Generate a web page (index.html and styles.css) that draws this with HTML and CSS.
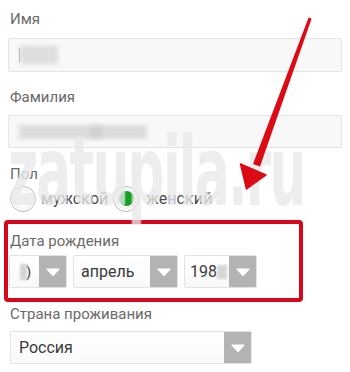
FILE: index.html
```html
<!DOCTYPE html>
<html lang="ru">
<head>
<meta charset="utf-8">
<link rel="stylesheet" href="styles.css">
</head>
<body>
<div class="form">
  <div class="lbl">Имя</div>
  <div class="input"><span class="caret"></span><span class="blur blur-name"></span></div>

  <div class="lbl lbl-2">Фамилия</div>
  <div class="input input-2"><span class="blur blur-surname"></span><span class="blur blur-dot"></span></div>

  <div class="lbl lbl-sex">Пол</div>
  <div class="radios">
    <span class="radio"></span><span class="rtext">мужской</span>
    <span class="radio radio-on"><span class="dot"></span></span><span class="rtext">женский</span>
  </div>

  <div class="redbox">
    <div class="lbl lbl-dob">Дата рождения</div>
    <div class="dob">
      <div class="sel sel-day"><span class="val"><span class="blur blur-day"></span><span class="paren">)</span></span><span class="arr"><svg width="14" height="8" viewBox="0 0 14 8"><path d="M1 1 H13 L7 7.5 Z" fill="#fff" stroke="#fff" stroke-width="1.2" stroke-linejoin="round"/></svg></span></div>
      <div class="sel sel-month"><span class="val">апрель</span><span class="arr"><svg width="14" height="8" viewBox="0 0 14 8"><path d="M1 1 H13 L7 7.5 Z" fill="#fff" stroke="#fff" stroke-width="1.2" stroke-linejoin="round"/></svg></span></div>
      <div class="sel sel-year"><span class="val">198<span class="blur blur-year"></span></span><span class="arr"><svg width="14" height="8" viewBox="0 0 14 8"><path d="M1 1 H13 L7 7.5 Z" fill="#fff" stroke="#fff" stroke-width="1.2" stroke-linejoin="round"/></svg></span></div>
    </div>
  </div>

  <div class="lbl lbl-country">Страна проживания</div>
  <div class="sel sel-country"><span class="val">Россия</span><span class="arr"><svg width="14" height="8" viewBox="0 0 14 8"><path d="M1 1 H13 L7 7.5 Z" fill="#fff" stroke="#fff" stroke-width="1.2" stroke-linejoin="round"/></svg></span></div>
</div>

<div class="watermark">zatupila.ru</div>

<svg class="pointer" width="350" height="372" viewBox="0 0 350 372">
  <polygon points="308.6,17.6 311.6,18.8 260,166.5 253,164" fill="#dc0a14"/>
  <polygon points="240.5,164 266,175 246.5,189" fill="#dc0a14" stroke="#dc0a14" stroke-width="1.5" stroke-linejoin="round"/>
</svg>
</body>
</html>
```
FILE: styles.css
```css
* { box-sizing: border-box; }
html, body { margin: 0; padding: 0; background: #fff; }
body {
  width: 350px;
  height: 372px;
  overflow: hidden;
  position: relative;
  font-family: Roboto, "Liberation Sans", sans-serif;
}
.form {
  padding: 10px 8px 0 8px;
}
.lbl {
  font-size: 15px;
  line-height: 18px;
  color: #6a6a6a;
  padding-left: 2px;
}
.lbl-2 { margin-top: 16px; }
.lbl-sex { margin-top: 17px; }
.lbl-country { margin-top: 3px; }
.lbl-dob { margin-top: 0; padding-left: 2px; }

.input {
  position: relative;
  margin-top: 10px;
  width: 334px;
  height: 34px;
  background: #f8f8f8;
  border: 1px solid #e4e4e4;
  border-radius: 2px;
  display: flex;
  align-items: center;
  padding-left: 10px;
}
.input-2 { margin-top: 9px; height: 33px; }

.caret {
  width: 1px;
  height: 14px;
  background: #a0a0a0;
}
.blur {
  display: inline-block;
  background: #d9d9d9;
  filter: blur(2px);
}
.blur-name { width: 38px; height: 18px; background: #dedede; }
.blur-surname { width: 128px; height: 14px; background: #dcdcdc; }
.blur-dot {
  position: absolute;
  left: 80px;
  top: 9px;
  width: 14px;
  height: 14px;
  border-radius: 50%;
  background: #d2d2d2;
}

.radios {
  display: flex;
  align-items: center;
  margin-top: 2px;
  height: 27px;
  padding-left: 2px;
}
.radio {
  width: 26px;
  height: 26px;
  border-radius: 50%;
  border: 1.5px solid #b9b9b9;
  background: #fff;
  box-shadow: inset 0 0 0 2px #fff, inset 0 0 0 3px #ececec;
  display: flex;
  align-items: center;
  justify-content: center;
  flex: none;
}
.dot {
  width: 15px;
  height: 15px;
  border-radius: 50%;
  background: #12a024;
}
.rtext {
  font-size: 16px;
  color: #4a4a4a;
  margin-left: 5px;
  margin-right: 5px;
  letter-spacing: 0.1px;
}
.radio-on + .rtext { margin-left: 7px; }

.redbox {
  margin-top: 8px;
  margin-left: -4px;
  width: 299px;
  border: 4px solid #d8061b;
  border-radius: 4px;
  padding: 8px 0 10px 0;
}
.dob {
  display: flex;
  gap: 6px;
  margin-top: 5px;
  padding-left: 1px;
}
.sel {
  display: flex;
  height: 33px;
  background: linear-gradient(#fff, #f9f9f9);
  border: 1px solid #e3e3e3;
  border-radius: 2px;
}
.val {
  flex: 1;
  display: flex;
  align-items: center;
  padding-left: 8px;
  font-size: 16px;
  color: #3a3a3a;
}
.arr {
  width: 27px;
  flex: none;
  background: #b3b3b3;
  display: flex;
  align-items: center;
  justify-content: center;
}
.sel-day { width: 58px; }
.sel-day .val { padding-left: 10px; }
.blur-day { width: 7px; height: 16px; background: #d4d4d4; filter: blur(1px); }
.paren { color: #444; font-size: 15px; margin-left: -1px; }
.sel-month { width: 105px; }
.sel-month .val { padding-left: 7px; }
.sel-year { width: 73px; }
.sel-year .val { padding-left: 5px; }
.blur-year { width: 10px; height: 14px; background: #d6d6d6; filter: blur(1.2px); }

.sel-country {
  margin-top: 8px;
  margin-left: 2px;
  width: 242px;
}
.sel-country .val { padding-left: 8px; }

.watermark {
  position: absolute;
  left: 8px;
  top: 116px;
  font-family: "DejaVu Sans Condensed", "DejaVu Sans", sans-serif;
  font-weight: bold;
  font-size: 96px;
  letter-spacing: -3px;
  transform: scaleX(0.6);
  transform-origin: left top;
  color: rgba(190, 190, 190, 0.28);
  text-shadow: 0 0 2px rgba(255, 255, 255, 0.7);
  pointer-events: none;
  white-space: nowrap;
}
.pointer {
  position: absolute;
  left: 0;
  top: 0;
  pointer-events: none;
}
```
